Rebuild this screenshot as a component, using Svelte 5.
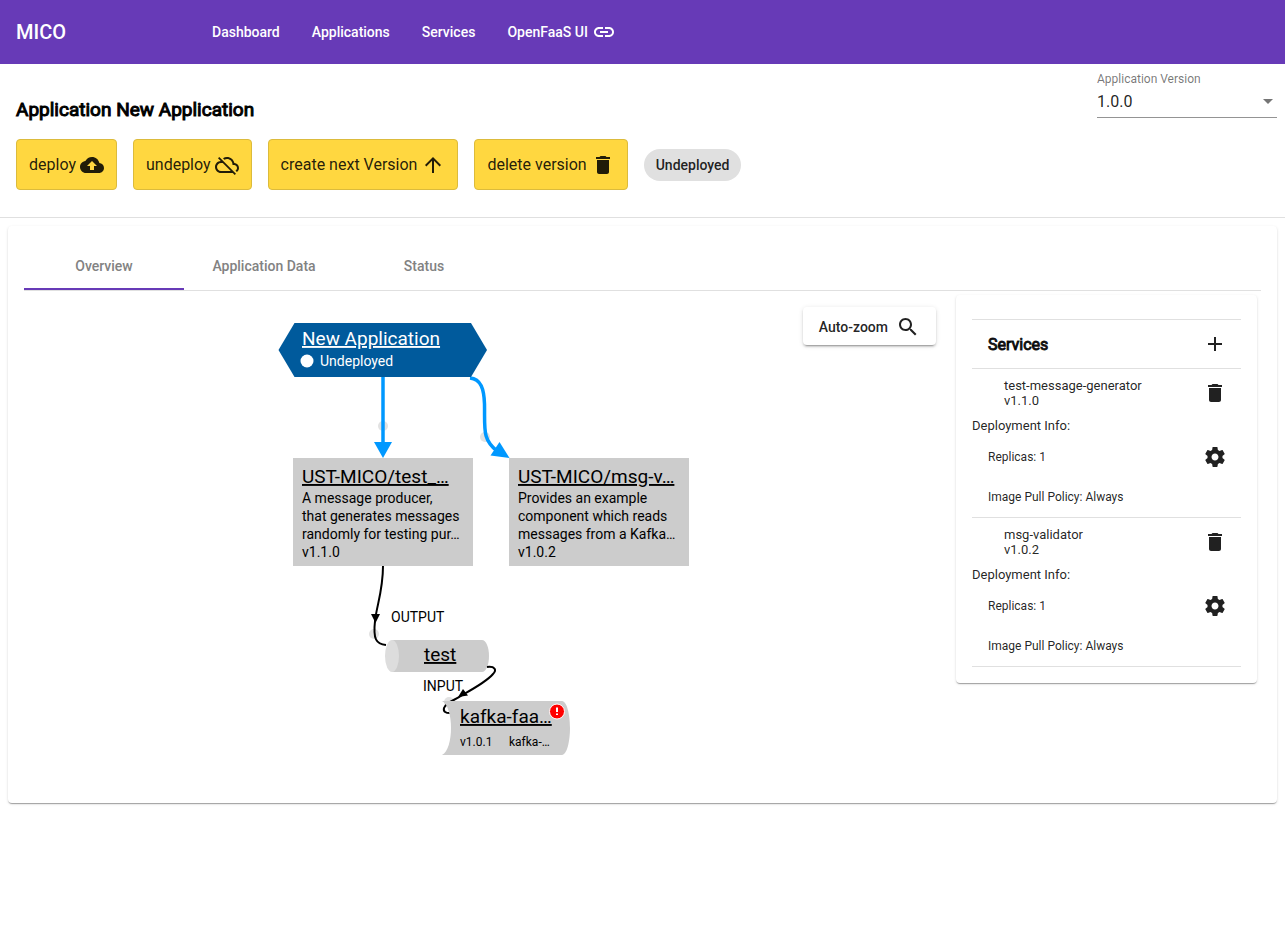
<script>
  const icons = {
    link: 'M3.9 12c0-1.71 1.39-3.1 3.1-3.1h4V7H7c-2.76 0-5 2.24-5 5s2.24 5 5 5h4v-1.9H7c-1.71 0-3.1-1.39-3.1-3.1zM8 13h8v-2H8v2zm9-6h-4v1.9h4c1.71 0 3.1 1.39 3.1 3.1s-1.39 3.1-3.1 3.1h-4V17h4c2.76 0 5-2.24 5-5s-2.24-5-5-5z',
    upload: 'M19.35 10.04C18.67 6.59 15.64 4 12 4 9.11 4 6.6 5.64 5.35 8.04 2.34 8.36 0 10.91 0 14c0 3.31 2.69 6 6 6h13c2.76 0 5-2.24 5-5 0-2.64-2.05-4.78-4.65-4.96zM14 13v4h-4v-4H7l5-5 5 5h-3z',
    cloudOff: 'M19.35 10.04C18.67 6.59 15.64 4 12 4c-1.48 0-2.85.43-4.01 1.17l1.46 1.46C10.21 6.23 11.08 6 12 6c3.04 0 5.5 2.46 5.5 5.5v.5H19c1.66 0 3 1.34 3 3 0 1.13-.64 2.11-1.56 2.62l1.45 1.45C23.16 18.16 24 16.68 24 15c0-2.64-2.05-4.78-4.65-4.96zM3 5.27l2.75 2.74C2.56 8.15 0 10.77 0 14c0 3.31 2.69 6 6 6h11.73l2 2L21 20.73 4.27 4 3 5.27zM7.73 10l8 8H6c-2.21 0-4-1.79-4-4s1.79-4 4-4h1.73z',
    up: 'M4 12l1.41 1.41L11 7.83V20h2V7.83l5.58 5.59L20 12l-8-8-8 8z',
    trash: 'M6 19c0 1.1.9 2 2 2h8c1.1 0 2-.9 2-2V7H6v12zM19 4h-3.5l-1-1h-5l-1 1H5v2h14V4z',
    search: 'M15.5 14h-.79l-.28-.27C15.41 12.59 16 11.11 16 9.5 16 5.91 13.09 3 9.5 3S3 5.91 3 9.5 5.91 16 9.5 16c1.61 0 3.09-.59 4.23-1.57l.27.28v.79l5 4.99L20.49 19l-4.99-5zm-6 0C7.01 14 5 11.99 5 9.5S7.01 5 9.5 5 14 7.01 14 9.5 11.99 14 9.5 14z',
    add: 'M19 13h-6v6h-2v-6H5v-2h6V5h2v6h6v2z',
    settings: 'M19.43 12.98c.04-.32.07-.64.07-.98s-.03-.66-.07-.98l2.11-1.65c.19-.15.24-.42.12-.64l-2-3.46c-.12-.22-.39-.3-.61-.22l-2.49 1c-.52-.4-1.08-.73-1.69-.98l-.38-2.65C14.46 2.18 14.25 2 14 2h-4c-.25 0-.46.18-.49.42l-.38 2.65c-.61.25-1.17.59-1.69.98l-2.49-1c-.23-.09-.49 0-.61.22l-2 3.46c-.13.22-.07.49.12.64l2.11 1.65c-.04.32-.07.65-.07.98s.03.66.07.98l-2.11 1.65c-.19.15-.24.42-.12.64l2 3.46c.12.22.39.3.61.22l2.49-1c.52.4 1.08.73 1.69.98l.38 2.65c.03.24.24.42.49.42h4c.25 0 .46-.18.49-.42l.38-2.65c.61-.25 1.17-.59 1.69-.98l2.49 1c.23.09.49 0 .61-.22l2-3.46c.12-.22.07-.49-.12-.64l-2.11-1.65zM12 15.5c-1.93 0-3.5-1.57-3.5-3.5s1.57-3.5 3.5-3.5 3.5 1.57 3.5 3.5-1.57 3.5-3.5 3.5z',
  };

  const actions = [
    { label: 'deploy', icon: 'upload' },
    { label: 'undeploy', icon: 'cloudOff' },
    { label: 'create next Version', icon: 'up' },
    { label: 'delete version', icon: 'trash' },
  ];

  const tabs = ['Overview', 'Application Data', 'Status'];
  let activeTab = $state('Overview');

  const services = [
    { name: 'test-message-generator', version: 'v1.1.0', replicas: 1, policy: 'Always' },
    { name: 'msg-validator', version: 'v1.0.2', replicas: 1, policy: 'Always' },
  ];

  const serviceNodes = [
    {
      x: 15,
      title: 'UST-MICO/test_…',
      lines: ['A message producer,', 'that generates messages', 'randomly for testing pur…', 'v1.1.0'],
    },
    {
      x: 231,
      title: 'UST-MICO/msg-v…',
      lines: ['Provides an example', 'component which reads', 'messages from a Kafka…', 'v1.0.2'],
    },
  ];
</script>

{#snippet icon(name)}
  <svg class="icon" viewBox="0 0 24 24" aria-hidden="true"><path d={icons[name]} /></svg>
{/snippet}

<header class="toolbar">
  <a class="brand" href="#home">MICO</a>
  <nav>
    <a href="#dashboard">Dashboard</a>
    <a href="#applications">Applications</a>
    <a href="#services">Services</a>
    <a href="#openfaas">OpenFaaS UI {@render icon('link')}</a>
  </nav>
</header>

<section class="head">
  <div class="head-main">
    <h1>Application New Application</h1>
    <div class="actions">
      {#each actions as action}
        <button class="action">{action.label} {@render icon(action.icon)}</button>
      {/each}
      <span class="chip">Undeployed</span>
    </div>
  </div>
  <div class="field">
    <label for="version">Application Version</label>
    <div class="select-line">
      <select id="version">
        <option>1.0.0</option>
      </select>
      <svg class="caret" viewBox="0 0 10 5" aria-hidden="true"><path d="M0 0h10l-5 5z" /></svg>
    </div>
  </div>
</section>

<main class="card">
  <div class="tabs" role="tablist">
    {#each tabs as tab}
      <button role="tab" class:active={tab === activeTab} aria-selected={tab === activeTab} onclick={() => (activeTab = tab)}>{tab}</button>
    {/each}
  </div>

  <div class="overview">
    <div class="canvas">
      <svg class="graph" viewBox="0 0 412 496" role="img" aria-label="Application graph">
        <g class="handles">
          <circle cx="105" cy="135" r="5" />
          <circle cx="207" cy="146" r="5" />
          <circle cx="96" cy="343" r="5" />
          <circle cx="171" cy="411" r="5" />
        </g>
        <path class="edge-blue" d="M105 86V155" />
        <path class="head-blue" d="M96 151h18l-9 16z" />
        <path class="edge-blue" d="M192 87C203 88 206 98 206.500 113C207 138 204 148 219 160" />
        <path class="head-blue" d="M221.500 151L212.500 164.500L231.500 167z" />
        <path class="edge" d="M105 275C105 300 98.500 315 97 330C95 348 98 353 108 354" />
        <path class="head" d="M93 323h9l-4.500 9z" />

        <path class="app" d="M.5 59L16.500 32H193L209 59L193 86H16.500z" />
        <a href="#application"><text class="title light" x="24" y="54">New Application</text></a>
        <circle cx="29" cy="70" r="6.500" fill="#fff" />
        <text class="body light" x="42" y="75">Undeployed</text>

        {#each serviceNodes as node}
          <rect class="node" x={node.x} y="167" width="180" height="108" />
          <a href="#service"><text class="title" x={node.x + 9} y="192">{node.title}</text></a>
          {#each node.lines as line, i}
            <text class="body" x={node.x + 9} y={212 + i * 18}>{line}</text>
          {/each}
        {/each}

        <path class="node" d="M114 349H204C208 349 211 356 211 365S208 381 204 381H114z" />
        <ellipse cx="114" cy="365" rx="7" ry="16" fill="#ddd" />
        <a href="#topic"><text class="title" x="146" y="370">test</text></a>
        <text class="body" x="113" y="331">OUTPUT</text>

        <path class="edge" d="M209 376C217 375 219 379 215 383C209 390 195 398 186 403C176 410 168 411 166 417C165 421 168 422 172 422" />
        <path class="node" d="M164 410C170 413 173 425 173 437S170 461 164 464H284C289 464 292 450 292 437S289 410 284 410z" />
        <path class="head" d="M180 406L185 398L190 404.500z" />
        <text class="body" x="145" y="400">INPUT</text>
        <a href="#faas"><text class="title" x="182" y="432">kafka-faa…</text></a>
        <text class="small" x="182" y="455">v1.0.1</text>
        <text class="small" x="231" y="455">kafka-…</text>
        <circle cx="279" cy="420.500" r="7.500" fill="#f00" stroke="#fff" />
        <path d="M279 416.500v4.500M279 422.500v1.500" stroke="#fff" stroke-width="2" />
      </svg>
      <button class="zoom">Auto-zoom {@render icon('search')}</button>
    </div>

    <aside class="side">
      <div class="side-head">
        <h2>Services</h2>
        <button class="icon-button" aria-label="Add service">{@render icon('add')}</button>
      </div>
      {#each services as service}
        <article>
          <div class="service-name">
            <div>{service.name}<br />{service.version}</div>
            <button class="icon-button" aria-label="Remove service">{@render icon('trash')}</button>
          </div>
          <div class="info">Deployment Info:</div>
          <div class="detail">
            <span>Replicas: {service.replicas}</span>
            <button class="icon-button" aria-label="Deployment settings">{@render icon('settings')}</button>
          </div>
          <div class="detail">Image Pull Policy: {service.policy}</div>
        </article>
      {/each}
    </aside>
  </div>
</main>

<style>
  :global(body) {
    margin: 0;
    background: #fff;
    font-family: Roboto, "Liberation Sans", sans-serif;
    color: rgba(0, 0, 0, 0.87);
  }
  a {
    color: inherit;
    text-decoration: none;
  }
  button {
    border: 0;
    padding: 0;
    background: none;
    font-family: inherit;
    color: inherit;
    cursor: pointer;
  }
  .icon {
    width: 24px;
    height: 24px;
    flex: none;
    fill: currentColor;
  }

  .toolbar {
    display: flex;
    align-items: center;
    height: 64px;
    padding: 0 16px;
    background: #673ab7;
    color: #fff;
    font-weight: 500;
  }
  .brand {
    width: 180px;
    font-size: 20px;
  }
  nav {
    display: flex;
  }
  nav a {
    display: flex;
    align-items: center;
    gap: 4px;
    padding: 0 16px;
    font-size: 14px;
  }

  .head {
    display: flex;
    justify-content: space-between;
    padding: 0 8px 27px 16px;
    border-bottom: 1px solid #e0e0e0;
  }
  h1,
  h2 {
    -webkit-text-stroke: 1px currentColor;
    font-weight: 400;
  }
  h1 {
    margin: 34px 0 18px;
    font-size: 19px;
    line-height: 23px;
    color: #000;
  }
  .actions {
    display: flex;
    align-items: center;
    gap: 16px;
  }
  .action {
    display: flex;
    align-items: center;
    gap: 4px;
    height: 51px;
    padding: 0 12px;
    border: 1px solid #dcbb3c;
    border-radius: 4px;
    background: #ffd740;
    font-size: 16px;
  }
  .chip {
    padding: 8px 12px;
    border-radius: 16px;
    background: #e0e0e0;
    font-size: 14px;
    line-height: 16px;
    font-weight: 500;
  }
  .field {
    width: 180px;
    padding-top: 8px;
  }
  .field label {
    display: block;
    font-size: 12px;
    line-height: 14px;
    color: rgba(0, 0, 0, 0.54);
  }
  .select-line {
    display: flex;
    align-items: center;
    height: 31px;
    border-bottom: 1px solid #949494;
  }
  select {
    flex: 1;
    appearance: none;
    border: 0;
    padding: 0;
    background: none;
    font: 16px Roboto, sans-serif;
    color: inherit;
  }
  .caret {
    width: 10px;
    height: 5px;
    margin-right: 4px;
    fill: #757575;
  }

  .card,
  .side {
    border-radius: 4px;
    background: #fff;
    box-shadow:
      0 2px 1px -1px rgba(0, 0, 0, 0.2),
      0 1px 1px 0 rgba(0, 0, 0, 0.14),
      0 1px 3px 0 rgba(0, 0, 0, 0.12);
  }
  .card {
    margin: 8px;
    padding: 16px;
  }
  .tabs {
    display: flex;
    border-bottom: 1px solid #e0e0e0;
  }
  .tabs button {
    width: 160px;
    height: 48px;
    font-size: 14px;
    font-weight: 500;
    color: #828282;
  }
  .tabs .active {
    box-shadow: inset 0 -2px #673ab7;
  }
  .overview {
    display: flex;
    align-items: flex-start;
  }
  .canvas {
    position: relative;
    flex: 1;
    padding-right: 8px;
  }
  .graph {
    display: block;
    width: 412px;
    height: 496px;
    margin: 0 auto;
  }
  .zoom {
    position: absolute;
    top: 16px;
    right: 16px;
    display: flex;
    align-items: center;
    gap: 8px;
    padding: 8px 16px 6px;
    border-radius: 4px;
    background: #fff;
    font-size: 14px;
    font-weight: 500;
    box-shadow:
      0 3px 1px -2px rgba(0, 0, 0, 0.2),
      0 2px 2px 0 rgba(0, 0, 0, 0.14),
      0 1px 5px 0 rgba(0, 0, 0, 0.12);
  }

  .handles {
    fill: #e2e2e2;
  }
  .edge-blue {
    fill: none;
    stroke: #0098ff;
    stroke-width: 3.5;
  }
  .head-blue {
    fill: #0098ff;
  }
  .edge {
    fill: none;
    stroke: #000;
    stroke-width: 2;
  }
  .app {
    fill: #005a9c;
  }
  .node {
    fill: #ccc;
  }
  .graph text {
    fill: #000;
  }
  .graph .light {
    fill: #fff;
  }
  .title {
    font-size: 19px;
    text-decoration: underline;
    text-decoration-skip-ink: none;
  }
  .body {
    font-size: 14px;
  }
  .small {
    font-size: 12px;
  }

  .side {
    width: 269px;
    margin: 4px;
    padding: 24px 16px 16px;
  }
  .side-head {
    display: flex;
    align-items: center;
    justify-content: space-between;
    height: 48px;
    padding: 0 14px 0 16px;
    border-top: 1px solid #e0e0e0;
    border-bottom: 1px solid #e0e0e0;
  }
  h2 {
    margin: 0;
    font-size: 16px;
  }
  .icon-button {
    display: flex;
  }
  article {
    border-bottom: 1px solid #e0e0e0;
    font-size: 13px;
  }
  .service-name {
    display: flex;
    align-items: center;
    justify-content: space-between;
    height: 48px;
    padding: 0 14px 0 32px;
    line-height: 15px;
  }
  .info {
    padding-bottom: 2px;
    line-height: 18px;
  }
  .detail {
    display: flex;
    align-items: center;
    justify-content: space-between;
    height: 40px;
    padding: 0 14px 0 16px;
    font-size: 12px;
  }
</style>
